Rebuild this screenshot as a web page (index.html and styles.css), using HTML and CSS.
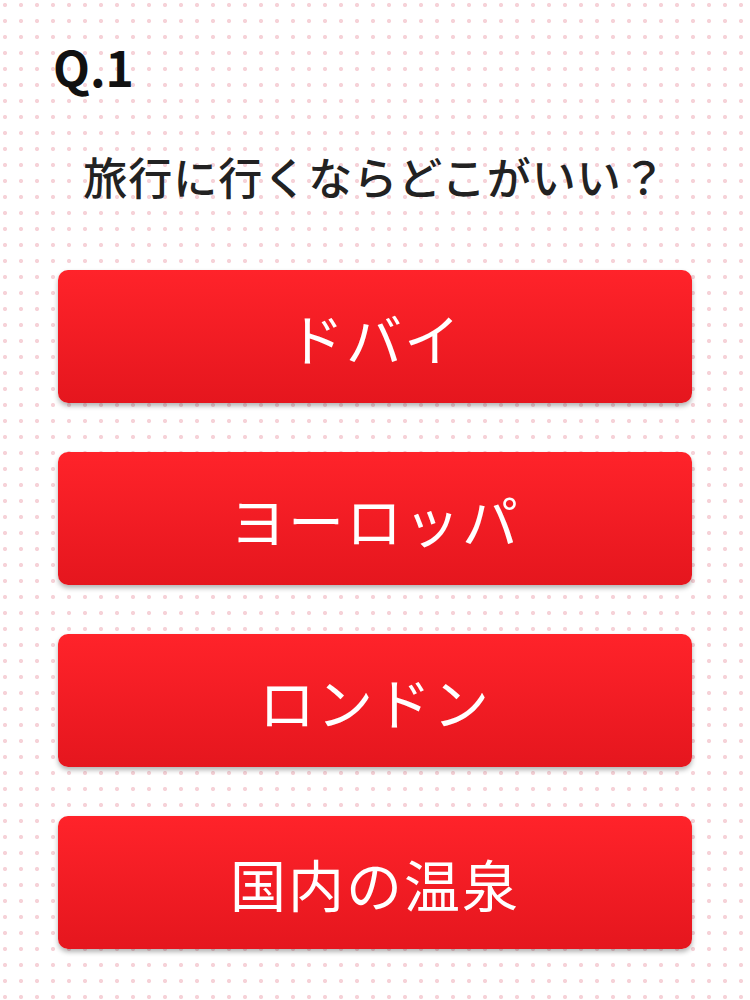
FILE: index.html
```html
<!DOCTYPE html>
<html lang="ja">
<head>
    <meta charset="UTF-8">
    <meta name="viewport" content="width=device-width, initial-scale=1.0">
    <title>診断 Q.1</title>
    <link rel="stylesheet" href="styles.css">
</head>
<body>
    <main class="quiz">
        <div class="quiz-number">Q.1</div>
        <h1 class="quiz-question">旅行に行くならどこがいい？</h1>
        <div class="answers">
            <button class="answer">ドバイ</button>
            <button class="answer">ヨーロッパ</button>
            <button class="answer">ロンドン</button>
            <button class="answer">国内の温泉</button>
        </div>
    </main>
</body>
</html>
```

FILE: styles.css
```css
* {
    margin: 0;
    padding: 0;
    box-sizing: border-box;
}

html, body {
    height: 100%;
}

body {
    font-family: "Noto Sans CJK JP", "Noto Sans", sans-serif;
    color: #1e1e1e;
    background-color: #fff;
    background-image: radial-gradient(circle, #f6d2d8 1.7px, transparent 2.4px);
    background-size: 16px 16px;
    background-position: -3px -3px;
}

.quiz {
    padding: 38px 58px 0;
}

.quiz-number {
    font-size: 48px;
    font-weight: bold;
    line-height: 1.2;
    letter-spacing: 0;
    margin-left: -5px;
    color: #111;
}

.quiz-question {
    margin-top: 54px;
    font-size: 44px;
    font-weight: 500;
    line-height: 1.2;
    text-align: center;
    letter-spacing: 1px;
    color: #222;
}

.answers {
    margin-top: 68px;
    display: flex;
    flex-direction: column;
    gap: 49px;
}

.answer {
    height: 133px;
    border: none;
    border-radius: 10px;
    background: linear-gradient(to bottom, #ff232a, #e5161e);
    box-shadow: 0 3px 5px rgba(0, 0, 0, 0.3);
    color: #fff;
    font-family: inherit;
    font-size: 56px;
    font-weight: 400;
    letter-spacing: 2px;
    cursor: pointer;
}
```
